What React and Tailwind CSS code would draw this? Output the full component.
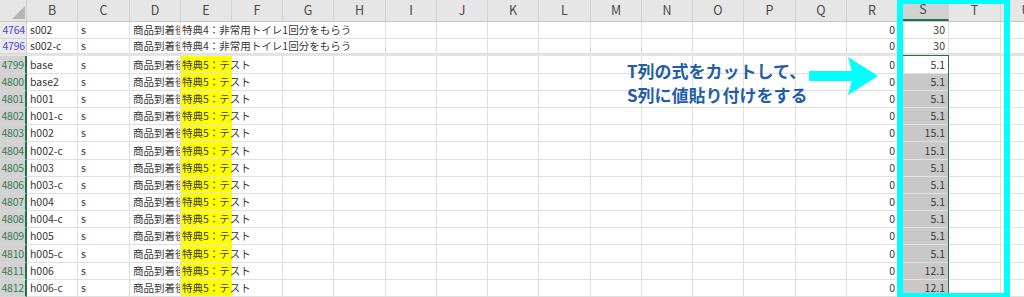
import React from "react";

const COLS = [
  { l: "B", w: "w-[51px]" },
  { l: "C", w: "w-[52px]" },
  { l: "D", w: "w-[51px]" },
  { l: "E", w: "w-[51px]" },
  { l: "F", w: "w-[51px]" },
  { l: "G", w: "w-[51px]" },
  { l: "H", w: "w-[52px]" },
  { l: "I", w: "w-[51px]" },
  { l: "J", w: "w-[51px]" },
  { l: "K", w: "w-[51px]" },
  { l: "L", w: "w-[52px]" },
  { l: "M", w: "w-[51px]" },
  { l: "N", w: "w-[51px]" },
  { l: "O", w: "w-[51px]" },
  { l: "P", w: "w-[52px]" },
  { l: "Q", w: "w-[51px]" },
  { l: "R", w: "w-[51px]" },
  { l: "S", w: "w-[51px]" },
  { l: "T", w: "w-[52px]" },
  { l: "U", w: "w-[51px]" },
];

const ROWS = [
  ["4764", "s002", "30"],
  ["4796", "s002-c", "30"],
  ["4799", "base", "5.1"],
  ["4800", "base2", "5.1"],
  ["4801", "h001", "5.1"],
  ["4802", "h001-c", "5.1"],
  ["4803", "h002", "15.1"],
  ["4804", "h002-c", "15.1"],
  ["4805", "h003", "5.1"],
  ["4806", "h003-c", "5.1"],
  ["4807", "h004", "5.1"],
  ["4808", "h004-c", "5.1"],
  ["4809", "h005", "5.1"],
  ["4810", "h005-c", "5.1"],
  ["4811", "h006", "12.1"],
  ["4812", "h006-c", "12.1"],
];

const font = { fontFamily: '"Noto Sans CJK JP", "Noto Sans", sans-serif' };

function HeaderRow() {
  return (
    <div className="flex h-[22px] shrink-0 bg-[#e6e6e6] border-b border-[#c6c6c6]">
      <div className="w-[27px] shrink-0 relative border-r border-[#cfcfcf]">
        <svg width="27" height="21" className="absolute left-0 top-0">
          <polygon points="12,19 25,19 25,6" fill="#b5b5b5" />
        </svg>
      </div>
      {COLS.map((c) => {
        const sel = c.l === "S";
        return (
          <div
            key={c.l}
            className={`${c.w} shrink-0 flex items-center justify-center text-[12.5px] text-[#4a4a4a] border-r border-[#d3d3d3] ${
              sel ? "bg-[#d2d2d2] border-b-2 border-b-[#217346] text-[#3b3b3b]" : ""
            }`}
          >
            {c.l}
          </div>
        );
      })}
    </div>
  );
}

function DataRow({ r, i }) {
  const [num, code, sval] = r;
  const top = i < 2;
  const rowSel = !top;
  return (
    <div
      className={`flex h-[17.2px] shrink-0 text-[10.5px] text-[#383838] ${
        i === 1 ? "border-b-2 border-[#e4e4e4]" : ""
      }`}
    >
      <div
        className={`w-[27px] shrink-0 flex items-center justify-end pr-[1px] text-[10.5px] tracking-[-0.2px] border-b border-[#d6d6d6] ${
          rowSel
            ? "bg-[#d2d2d2] text-[#3c7a52] border-r-2 border-r-[#217346]"
            : "bg-[#ebebeb] text-[#4646ee] border-r border-r-[#cfcfcf]"
        }`}
      >
        {num}
      </div>
      {COLS.map((c) => {
        const base = `${c.w} shrink-0 h-full flex items-center border-b border-[#e0e0e0] whitespace-nowrap`;
        const noRight =
          (c.l === "E" || c.l === "F" || c.l === "G") && top
            ? true
            : c.l === "E" && !top;
        const br = noRight ? "" : "border-r border-r-[#e0e0e0]";
        let content = null;
        let extra = "";
        if (c.l === "B") {
          content = code;
          extra = "pl-[3px]";
        } else if (c.l === "C") {
          content = "s";
          extra = "pl-[3px]";
        } else if (c.l === "D") {
          content = "商品到着後";
          extra = "pl-[3px] overflow-hidden";
        } else if (c.l === "E") {
          content = top ? "特典4：非常用トイレ1回分をもらう" : "特典5：テスト";
          extra = `pl-[1px] overflow-visible relative z-10 ${top ? "" : "bg-[#ffff00]"}`;
        } else if (c.l === "R") {
          content = "0";
          extra = "justify-end pr-[2px]";
        } else if (c.l === "S") {
          content = sval;
          extra = `justify-end pr-[3px] ${i >= 3 ? "bg-[#c8c8c8]" : ""}`;
        }
        return (
          <div key={c.l} className={`${base} ${br} ${extra}`}>
            {content}
          </div>
        );
      })}
    </div>
  );
}

export default function App() {
  return (
    <div className="relative w-[1024px] h-[297px] overflow-hidden bg-white" style={font}>
      <div className="flex flex-col">
        <HeaderRow />
        {ROWS.map((r, i) => (
          <DataRow key={r[0]} r={r} i={i} />
        ))}
      </div>

      {/* selection outline */}
      <div className="absolute left-[897px] top-[55px] w-[52px] h-[260px] border border-[#217346]" />

      {/* annotation text */}
      <div
        className="absolute left-[627px] top-[59px] text-[17px] font-bold leading-[24px] text-[#1f5ea8] whitespace-nowrap"
        style={{ fontFamily: '"Noto Sans CJK JP", sans-serif' }}
      >
        <div>T列の式をカットして、</div>
        <div>S列に値貼り付けをする</div>
      </div>

      {/* arrow */}
      <svg className="absolute left-[805px] top-[54px]" width="80" height="46" viewBox="0 0 80 46">
        <rect x="4" y="17" width="45" height="10" fill="#00ffff" />
        <polygon points="43,3 73,22 43,41 48,22" fill="#00ffff" />
      </svg>

      {/* cyan highlight rectangle */}
      <div className="absolute left-[897px] top-[-2px] w-[113px] h-[301px] border-[6px] border-[#00ffff]" />
    </div>
  );
}
